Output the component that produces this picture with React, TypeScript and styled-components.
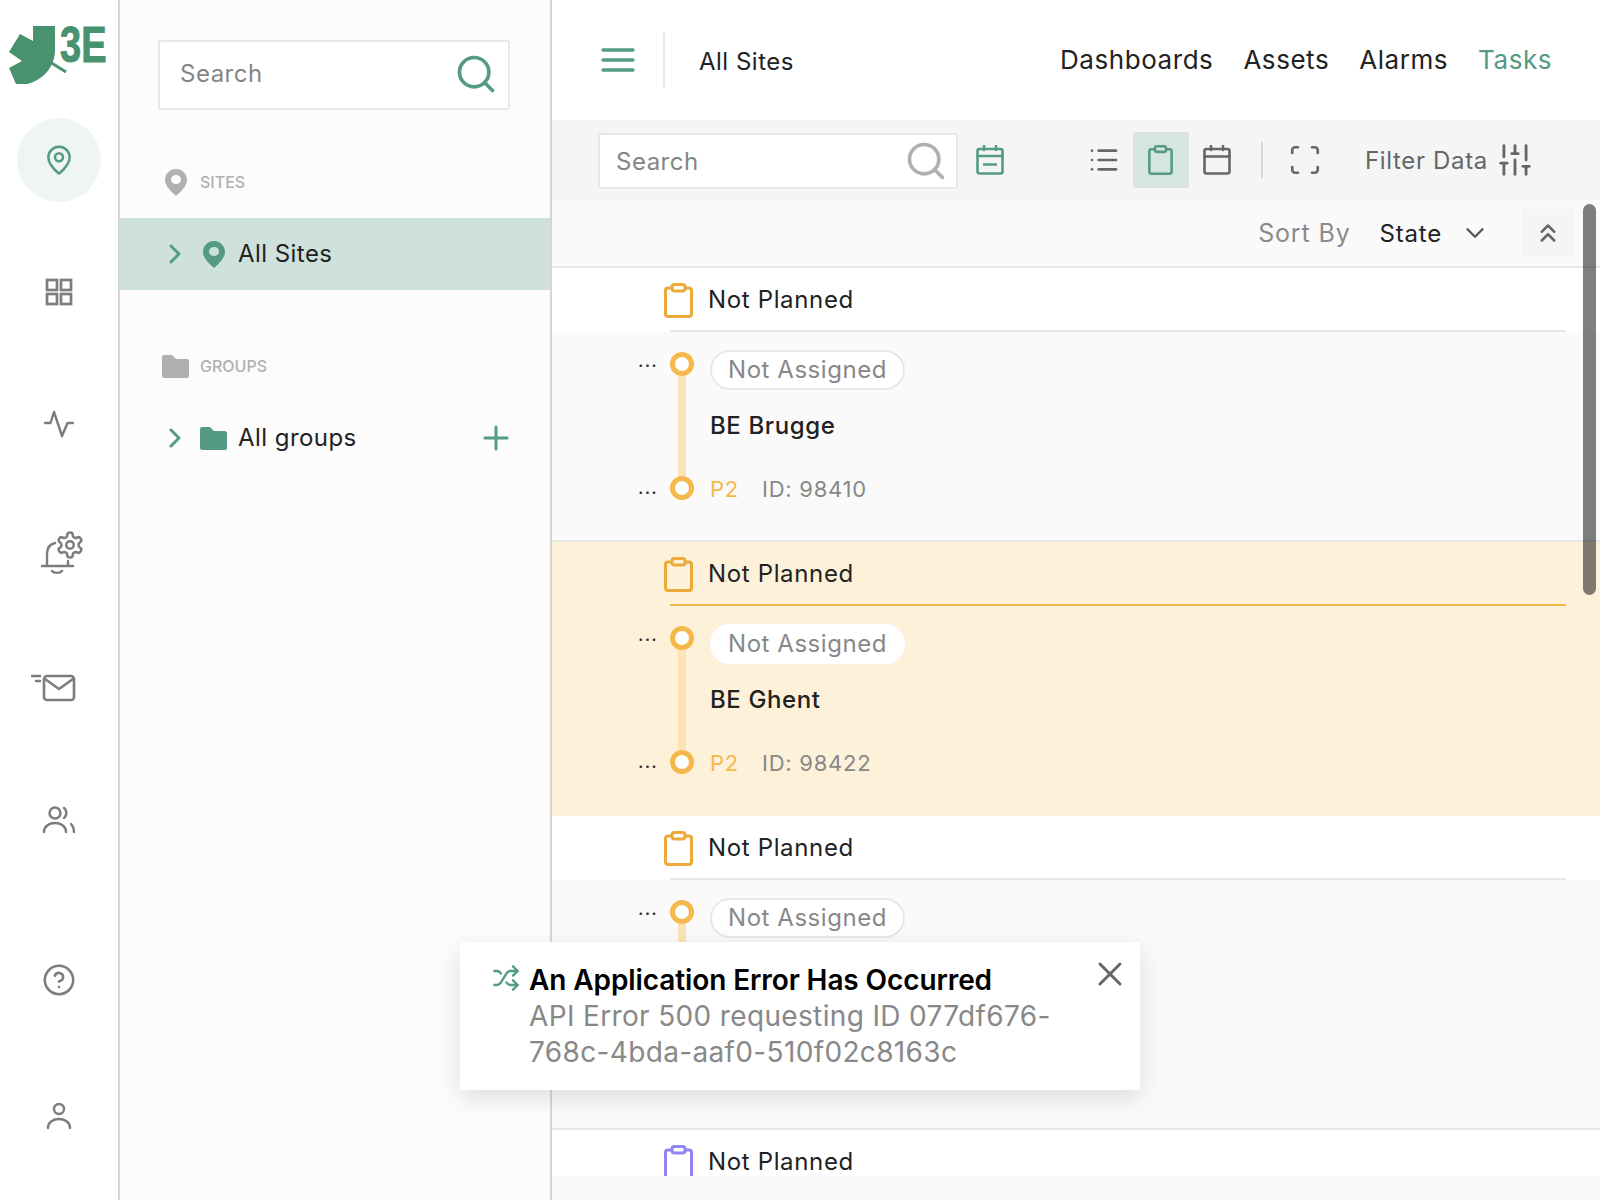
import React from "react";
import styled, { createGlobalStyle } from "styled-components";
import {
  ChevronDown,
  ChevronsUp,
  CircleHelp,
  List,
  MapPin,
  Plus,
  Scan,
  Search,
  Shuffle,
  SlidersVertical,
  X,
} from "lucide-react";

const GREEN = "#559a85";
const GREY = "#7d7d7d";
const ORANGE = "#f5b84a";

const GlobalStyle = createGlobalStyle`
  html, body {
    margin: 0;
    padding: 0;
    background: #fff;
  }
  * {
    box-sizing: border-box;
  }
  body {
    font-family: Inter, "Liberation Sans", sans-serif;
    color: #222;
  }
`;

const Logo = () => (
  <LogoSvg viewBox="0 0 110 90" width="110" height="90">
    <path
      d="M33 26H55V50C55 66 44 80 27 84H16L9 68L22 61L9 52L20 34L33 41Z"
      fill="#48926f"
    />
    <path d="M50 62L66 72" stroke="#48926f" strokeWidth="3" />
    <LogoText transform="translate(60 62) scale(0.76 1)">3E</LogoText>
  </LogoSvg>
);

const HamburgerIcon = () => (
  <svg viewBox="0 0 34 24" width="34" height="24" fill="none" stroke={GREEN} strokeWidth="3.4" strokeLinecap="round">
    <path d="M2 2H32M2 12H32M2 22H32" />
  </svg>
);

const GridIcon = () => (
  <svg viewBox="0 0 28 28" width="28" height="28" fill="none" stroke={GREY} strokeWidth="2.700">
    <rect x="2" y="2" width="10" height="10" />
    <rect x="16" y="2" width="10" height="10" />
    <rect x="2" y="16" width="10" height="10" />
    <rect x="16" y="16" width="10" height="10" />
  </svg>
);

const PulseIcon = () => (
  <svg viewBox="0 0 30 28" width="30" height="28" fill="none" stroke={GREY} strokeWidth="2.400" strokeLinecap="round" strokeLinejoin="round">
    <path d="M1 13H6.500L10 2L18 26L23.500 13H29" />
  </svg>
);

const BellGearIcon = () => (
  <BellSvg viewBox="0 0 44 46" width="44" height="46" fill="none" stroke={GREY} strokeWidth="2.400" strokeLinecap="round" strokeLinejoin="round">
    <path d="M15 13C10 14 7 18 7 24V36M2 36H33M28 31V36M12 41C14 43.500 20 43.500 22 41" />
    <svg x="15" y="0" width="30" height="30" viewBox="0 0 24 24" strokeWidth="2">
      <path d="M12.220 2h-.44a2 2 0 0 0-2 2v.18a2 2 0 0 1-1 1.730l-.43.25a2 2 0 0 1-2 0l-.15-.08a2 2 0 0 0-2.730.73l-.22.38a2 2 0 0 0 .73 2.730l.15.1a2 2 0 0 1 1 1.720v.51a2 2 0 0 1-1 1.740l-.15.09a2 2 0 0 0-.73 2.730l.22.38a2 2 0 0 0 2.730.73l.15-.08a2 2 0 0 1 2 0l.43.25a2 2 0 0 1 1 1.730V20a2 2 0 0 0 2 2h.44a2 2 0 0 0 2-2v-.18a2 2 0 0 1 1-1.730l.43-.25a2 2 0 0 1 2 0l.15.08a2 2 0 0 0 2.730-.73l.22-.39a2 2 0 0 0-.73-2.730l-.15-.08a2 2 0 0 1-1-1.740v-.5a2 2 0 0 1 1-1.740l.15-.09a2 2 0 0 0 .73-2.730l-.22-.38a2 2 0 0 0-2.730-.73l-.15.08a2 2 0 0 1-2 0l-.43-.25a2 2 0 0 1-1-1.730V4a2 2 0 0 0-2-2z" />
      <circle cx="12" cy="12" r="3" />
    </svg>
  </BellSvg>
);

const MailIcon = () => (
  <MailSvg viewBox="0 0 46 28" width="46" height="28" fill="none" stroke={GREY} strokeWidth="2.600" strokeLinecap="round" strokeLinejoin="round">
    <rect x="13" y="2" width="30" height="24" rx="3" />
    <path d="M14 5L28 15L42 5" />
    <path d="M1 2H9M5 7H9" />
  </MailSvg>
);

const UsersIcon = () => (
  <svg viewBox="0 0 34 28" width="34" height="28" fill="none" stroke={GREY} strokeWidth="2.400" strokeLinecap="round">
    <circle cx="13" cy="7" r="5.500" />
    <path d="M22 2C25 4 25 10 22 12" />
    <path d="M2 26C2 14 24 14 24 26" />
    <path d="M29 18C31 20 32 23 32 26" />
  </svg>
);

const PersonIcon = () => (
  <svg viewBox="0 0 26 28" width="26" height="28" fill="none" stroke={GREY} strokeWidth="2.400" strokeLinecap="round">
    <circle cx="13" cy="7" r="5" />
    <path d="M2 26C2 14 24 14 24 26" />
  </svg>
);

const Pin = ({ color }: { color: string }) => (
  <svg viewBox="0 0 22 27" width="22" height="27">
    <path
      fillRule="evenodd"
      fill={color}
      d="M11 0C5 0 0 4.800 0 10.800C0 17 6 22.500 11 27C16 22.500 22 17 22 10.800C22 4.800 17 0 11 0ZM11 6C14 6 16 8 16 10.500C16 13 14 15 11 15C8 15 6 13 6 10.500C6 8 8 6 11 6Z"
    />
  </svg>
);

const Folder = ({ color }: { color: string }) => (
  <svg viewBox="0 0 27 23" width="27" height="23">
    <path
      fill={color}
      d="M2 0H9C10 0 10.500 .4 11.200 1.200L14 4H25C26 4 27 5 27 6V21C27 22 26 23 25 23H2C1 23 0 22 0 21V2C0 1 1 0 2 0Z"
    />
  </svg>
);

const RowChevron = () => (
  <svg viewBox="0 0 12 20" width="12" height="20" fill="none" stroke={GREEN} strokeWidth="3" strokeLinecap="round" strokeLinejoin="round">
    <path d="M2 2L10 10L2 18" />
  </svg>
);

const PlanCalendar = () => (
  <svg viewBox="0 0 28 30" width="28" height="30" fill="none" stroke={GREEN} strokeWidth="2.600" strokeLinecap="round">
    <rect x="1.500" y="4" width="25" height="24.500" rx="2" />
    <path d="M1.500 11H26.500M8 1V5M20 1V5M8 19.500H20" />
  </svg>
);

const PlainCalendar = () => (
  <svg viewBox="0 0 28 30" width="28" height="30" fill="none" stroke="#666" strokeWidth="2.600" strokeLinecap="round">
    <rect x="1.500" y="4" width="25" height="24.500" rx="2" />
    <path d="M1.500 11.500H26.500M8 1V5M20 1V5" />
  </svg>
);

const Clipboard = ({ color, width, height }: { color: string; width: number; height: number }) => (
  <svg viewBox="0 0 29 35" width={width} height={height} fill="none" stroke={color} strokeWidth="3" strokeLinejoin="round">
    <path d="M8 5H4C2.500 5 1.500 6 1.500 7.500V31C1.500 32.500 2.500 33.500 4 33.500H25C26.500 33.500 27.500 32.500 27.500 31V7.500C27.500 6 26.500 5 25 5H21" />
    <rect x="8" y="1.500" width="13" height="6.500" rx="2.500" />
  </svg>
);

type Task = {
  site?: string;
  taskId?: string;
  highlight?: boolean;
  accent: string;
  bodyHeight?: number;
};

const tasks: Task[] = [
  { site: "BE Brugge", taskId: "98410", accent: "#eeaa38", bodyHeight: 208 },
  { site: "BE Ghent", taskId: "98422", accent: "#eeaa38", bodyHeight: 208, highlight: true },
  { accent: "#eeaa38", bodyHeight: 248 },
  { accent: "#8f85f5" },
];

const TaskGroup = ({ task }: { task: Task }) => (
  <Group $highlight={task.highlight}>
    <GroupHead>
      <Clipboard color={task.accent} width={29} height={35} />
      <GroupTitle>Not Planned</GroupTitle>
    </GroupHead>
    <HeadRule $highlight={task.highlight} />
    {task.bodyHeight && (
      <GroupBody $height={task.bodyHeight} $highlight={task.highlight}>
        <Dots>...</Dots>
        <Ring />
        <Pill $highlight={task.highlight}>Not Assigned</Pill>
        <span />
        <Stem />
        <SiteName>{task.site}</SiteName>
        {task.taskId && <Dots $low>...</Dots>}
        {task.taskId && <Ring />}
        {task.taskId && (
          <MetaRow>
            <Priority>P2</Priority>
            <TaskId>ID: {task.taskId}</TaskId>
          </MetaRow>
        )}
      </GroupBody>
    )}
  </Group>
);

export default function App() {
  return (
    <Page>
      <GlobalStyle />
      <Rail>
        <LogoSlot>
          <Logo />
        </LogoSlot>
        <NavItem>
          <ActiveBubble>
            <MapPin size={32} color={GREEN} strokeWidth={1.9} />
          </ActiveBubble>
        </NavItem>
        <NavItem>
          <GridIcon />
        </NavItem>
        <NavItem>
          <PulseIcon />
        </NavItem>
        <NavItem>
          <BellGearIcon />
        </NavItem>
        <NavItem>
          <MailIcon />
        </NavItem>
        <NavItem>
          <UsersIcon />
        </NavItem>
        <RailBottom>
          <NavItem $tall>
            <CircleHelp size={34} color={GREY} strokeWidth={1.8} />
          </NavItem>
          <NavItem $tall>
            <PersonIcon />
          </NavItem>
        </RailBottom>
      </Rail>

      <Sidebar>
        <SideSearch>
          <SideHint>Search</SideHint>
          <Search size={44} color={GREEN} strokeWidth={2} />
        </SideSearch>
        <SectionLabel>
          <Pin color="#b0b0b0" />
          <SectionText>SITES</SectionText>
        </SectionLabel>
        <TreeRow $selected>
          <RowChevron />
          <IconSlot>
            <Pin color={GREEN} />
          </IconSlot>
          <RowText>All Sites</RowText>
        </TreeRow>
        <SectionLabel $second>
          <Folder color="#b0b0b0" />
          <SectionText>GROUPS</SectionText>
        </SectionLabel>
        <TreeRow>
          <RowChevron />
          <IconSlot>
            <Folder color={GREEN} />
          </IconSlot>
          <RowText>All groups</RowText>
          <AddButton>
            <Plus size={38} color={GREEN} strokeWidth={1.9} />
          </AddButton>
        </TreeRow>
      </Sidebar>

      <Main>
        <Header>
          <HamburgerIcon />
          <HeaderDivider />
          <Crumb>All Sites</Crumb>
          <Tabs>
            <Tab>Dashboards</Tab>
            <Tab>Assets</Tab>
            <Tab>Alarms</Tab>
            <Tab $active>Tasks</Tab>
          </Tabs>
        </Header>

        <Toolbar>
          <ToolSearch>
            <ToolHint>Search</ToolHint>
            <Search size={44} color="#b0b0b0" strokeWidth={2} />
          </ToolSearch>
          <PlanSlot>
            <PlanCalendar />
          </PlanSlot>
          <ViewSwitch>
            <ViewButton>
              <List size={34} color="#666" strokeWidth={2} />
            </ViewButton>
            <ViewButton $active>
              <Clipboard color={GREEN} width={25} height={30} />
            </ViewButton>
            <ViewButton>
              <PlainCalendar />
            </ViewButton>
          </ViewSwitch>
          <ToolDivider />
          <ScanSlot>
            <Scan size={34} color="#666" strokeWidth={1.9} />
          </ScanSlot>
          <FilterLabel>Filter Data</FilterLabel>
          <SlidersVertical size={38} color="#666" strokeWidth={1.8} />
        </Toolbar>

        <SortBar>
          <SortLabel>Sort By</SortLabel>
          <SortValue>State</SortValue>
          <ChevronDown size={30} color="#555" strokeWidth={1.9} />
          <CollapseButton>
            <ChevronsUp size={30} color="#666" strokeWidth={2} />
          </CollapseButton>
        </SortBar>

        <TaskList>
          {tasks.map((task, i) => (
            <TaskGroup key={i} task={task} />
          ))}
        </TaskList>
        <Scrollbar />
      </Main>

      <Toast>
        <ToastIcon>
          <Shuffle size={28} color={GREEN} strokeWidth={2} />
        </ToastIcon>
        <ToastText>
          <ToastTitle>An Application Error Has Occurred</ToastTitle>
          <ToastMessage>API Error 500 requesting ID 077df676-768c-4bda-aaf0-510f02c8163c</ToastMessage>
        </ToastText>
        <ToastClose>
          <X size={40} color="#666" strokeWidth={1.8} />
        </ToastClose>
      </Toast>
    </Page>
  );
}

const Page = styled.div`
  position: relative;
  display: flex;
  width: 1600px;
  height: 1200px;
  overflow: hidden;
`;

const Rail = styled.nav`
  display: flex;
  flex-direction: column;
  flex: 0 0 120px;
  border-right: 2px solid #d6d6d6;
  background: #fff;
`;

const LogoSlot = styled.div`
  height: 94px;
`;

const LogoSvg = styled.svg`
  display: block;
`;

const LogoText = styled.text`
  font-family: "Liberation Sans", sans-serif;
  font-weight: 700;
  font-size: 50px;
  fill: #48926f;
  stroke: #48926f;
  stroke-width: 1px;
`;

const BellSvg = styled.svg`
  margin: -6px 0 0 6px;
`;

const MailSvg = styled.svg`
  margin-right: 10px;
`;

const NavItem = styled.div<{ $tall?: boolean }>`
  display: flex;
  align-items: center;
  justify-content: center;
  height: ${(p) => (p.$tall ? 136 : 132)}px;
`;

const ActiveBubble = styled.div`
  display: flex;
  align-items: center;
  justify-content: center;
  width: 84px;
  height: 84px;
  border-radius: 50%;
  background: #eef5f3;
`;

const RailBottom = styled.div`
  margin-top: auto;
  padding-bottom: 16px;
`;

const Sidebar = styled.aside`
  flex: 0 0 432px;
  padding-top: 40px;
  border-right: 2px solid #d6d6d6;
  background: #fcfcfc;
`;

const SearchBox = styled.div`
  display: flex;
  align-items: center;
  justify-content: space-between;
  background: #fff;
  border: 2px solid #e8e8e8;
  border-radius: 3px;
`;

const SideSearch = styled(SearchBox)`
  width: 352px;
  height: 70px;
  margin-left: 38px;
  padding: 0 10px 2px 20px;
`;

const SearchHint = styled.span`
  font-size: 24px;
  letter-spacing: 0.5px;
  color: #858585;
`;

const SideHint = styled(SearchHint)`
  margin-top: -2px;
`;

const ToolHint = styled(SearchHint)`
  margin-top: 1px;
`;

const SectionLabel = styled.div<{ $second?: boolean }>`
  display: flex;
  align-items: center;
  gap: ${(p) => (p.$second ? 11 : 13)}px;
  height: 28px;
  margin-top: ${(p) => (p.$second ? 62 : 58)}px;
  margin-bottom: 22px;
  padding-left: ${(p) => (p.$second ? 42 : 45)}px;
`;

const SectionText = styled.span`
  font-size: 16px;
  font-weight: 500;
  color: #b0b0b0;
`;

const TreeRow = styled.div<{ $selected?: boolean }>`
  display: flex;
  align-items: center;
  height: 72px;
  padding: 0 40px 0 49px;
  background: ${(p) => (p.$selected ? "#cfe1dc" : "transparent")};
`;

const IconSlot = styled.div`
  display: flex;
  justify-content: center;
  width: 27px;
  margin: 0 11px 0 19px;
`;

const RowText = styled.span`
  margin-top: -2px;
  font-size: 24px;
  letter-spacing: 0.45px;
  color: #222;
`;

const AddButton = styled.div`
  display: flex;
  margin: 0 -5px 0 auto;
`;

const Main = styled.main`
  position: relative;
  display: flex;
  flex-direction: column;
  flex: 1;
  min-width: 0;
  background: #fafafa;
`;

const Header = styled.header`
  display: flex;
  align-items: center;
  flex: 0 0 120px;
  padding: 0 48px 0 49px;
  background: #fff;
`;

const HeaderDivider = styled.div`
  width: 2px;
  height: 56px;
  margin: 0 34px 0 28px;
  background: #e8e8e8;
`;

const Crumb = styled.span`
  font-size: 24px;
  letter-spacing: 0.5px;
  margin-top: 2px;
`;

const Tabs = styled.div`
  display: flex;
  gap: 30px;
  margin: -2px 0 0 auto;
`;

const Tab = styled.span<{ $active?: boolean }>`
  font-size: 26px;
  letter-spacing: 0.55px;
  color: ${(p) => (p.$active ? GREEN : "#222")};
`;

const Toolbar = styled.div`
  display: flex;
  align-items: center;
  flex: 0 0 80px;
  padding-left: 46px;
  background: #f5f5f5;
`;

const ToolSearch = styled(SearchBox)`
  width: 360px;
  height: 56px;
  margin-top: 2px;
  padding: 0 8px 0 16px;
`;

const PlanSlot = styled.div`
  display: flex;
  margin-left: 18px;
`;

const ViewSwitch = styled.div`
  display: flex;
  align-items: center;
  gap: 12.5px;
  margin-left: 84px;
`;

const ViewButton = styled.div<{ $active?: boolean }>`
  display: flex;
  align-items: center;
  justify-content: center;
  width: ${(p) => (p.$active ? 56 : 32)}px;
  height: 56px;
  border-radius: 3px;
  background: ${(p) => (p.$active ? "#d6e5e1" : "transparent")};
`;

const ToolDivider = styled.div`
  width: 2px;
  height: 36px;
  margin-left: 28px;
  background: #d8d8d8;
`;

const ScanSlot = styled.div`
  display: flex;
  margin-left: 25px;
`;

const FilterLabel = styled.span`
  margin: 0 8px 0 43px;
  font-size: 24px;
  letter-spacing: 0.65px;
  color: #666;
`;

const SortBar = styled.div`
  display: flex;
  align-items: center;
  justify-content: flex-end;
  flex: 0 0 68px;
  padding-right: 26px;
  border-bottom: 2px solid #e8e8e8;
`;

const SortLabel = styled.span`
  margin-right: 29px;
  font-size: 25px;
  letter-spacing: 0.85px;
  color: #8a8a8a;
`;

const SortValue = styled.span`
  margin-right: 18px;
  font-size: 24px;
  letter-spacing: 0.8px;
  color: #222;
`;

const CollapseButton = styled.div`
  display: flex;
  align-items: center;
  justify-content: center;
  width: 52px;
  height: 48px;
  margin-left: 32px;
  background: #f5f5f5;
  border-radius: 3px;
`;

const TaskList = styled.div`
  flex: 1;
  margin-bottom: 24px;
  overflow: hidden;
`;

const Scrollbar = styled.div`
  position: absolute;
  top: 204px;
  right: 4px;
  width: 13px;
  height: 391px;
  border-radius: 7px;
  background: rgba(0, 0, 0, 0.5);
`;

const Group = styled.section<{ $highlight?: boolean }>`
  background: ${(p) => (p.$highlight ? "#fdf1da" : "#fff")};
`;

const GroupHead = styled.div`
  display: flex;
  align-items: center;
  gap: 15px;
  height: 62px;
  padding: 2px 0 0 112px;
`;

const GroupTitle = styled.span`
  margin-top: -2px;
  font-size: 24px;
  letter-spacing: 0.65px;
  color: #222;
`;

const HeadRule = styled.div<{ $highlight?: boolean }>`
  height: 2px;
  margin: 0 34px 0 118px;
  background: ${(p) => (p.$highlight ? ORANGE : "#e8e8e8")};
`;

const GroupBody = styled.div<{ $height: number; $highlight?: boolean }>`
  display: grid;
  grid-template-columns: 18px 24px 1fr;
  grid-template-rows: 40px 84px 24px;
  column-gap: 14px;
  height: ${(p) => p.$height + 2}px;
  padding: 18px 0 0 86px;
  background: ${(p) => (p.$highlight ? "transparent" : "#fafafa")};
  border-bottom: 2px solid ${(p) => (p.$highlight ? "transparent" : "#e8e8e8")};
`;

const Dots = styled.span<{ $low?: boolean }>`
  margin-top: ${(p) => (p.$low ? 2 : -1)}px;
  font-size: 18px;
  line-height: 24px;
  font-weight: 500;
  letter-spacing: 1.2px;
  color: #333;
`;

const Ring = styled.span`
  width: 24px;
  height: 24px;
  margin-top: 2px;
  border: 5px solid ${ORANGE};
  border-radius: 50%;
  background: #fff;
`;

const Pill = styled.span<{ $highlight?: boolean }>`
  justify-self: start;
  height: 40px;
  margin-left: 2px;
  padding: 0 16px;
  border: 2px solid ${(p) => (p.$highlight ? "#fff" : "#e8e8e8")};
  border-radius: 20px;
  background: #fff;
  font-size: 24px;
  line-height: 36px;
  letter-spacing: 0.55px;
  color: #888;
`;

const Stem = styled.span`
  justify-self: center;
  width: 8px;
  margin-top: -14px;
  margin-bottom: -2px;
  background: #fbe3b5;
`;

const SiteName = styled.span`
  margin: 18px 0 0 2px;
  font-size: 24px;
  line-height: 36px;
  font-weight: 500;
  letter-spacing: 0.6px;
  color: #222;
`;

const MetaRow = styled.div`
  display: flex;
  gap: 23px;
  margin: 1px 0 0 2px;
  font-size: 22px;
  line-height: 28px;
  letter-spacing: 0.75px;
`;

const Priority = styled.span`
  color: ${ORANGE};
`;

const TaskId = styled.span`
  color: #888;
`;

const Toast = styled.div`
  position: absolute;
  top: 942px;
  left: 460px;
  display: flex;
  width: 680px;
  height: 148px;
  padding: 20px 10px 0 32px;
  background: #fff;
  box-shadow: 0 8px 24px rgba(0, 0, 0, 0.12);
`;

const ToastIcon = styled.div`
  flex: 0 0 37px;
  padding-top: 2px;
`;

const ToastText = styled.div`
  flex: 1;
  font-size: 28px;
  line-height: 36px;
`;

const ToastTitle = styled.div`
  font-weight: 600;
  letter-spacing: -0.1px;
  color: #000;
`;

const ToastMessage = styled.div`
  letter-spacing: 0.35px;
  color: #888;
`;

const ToastClose = styled.div`
  display: flex;
  align-self: flex-start;
  margin-top: -8px;
`;
